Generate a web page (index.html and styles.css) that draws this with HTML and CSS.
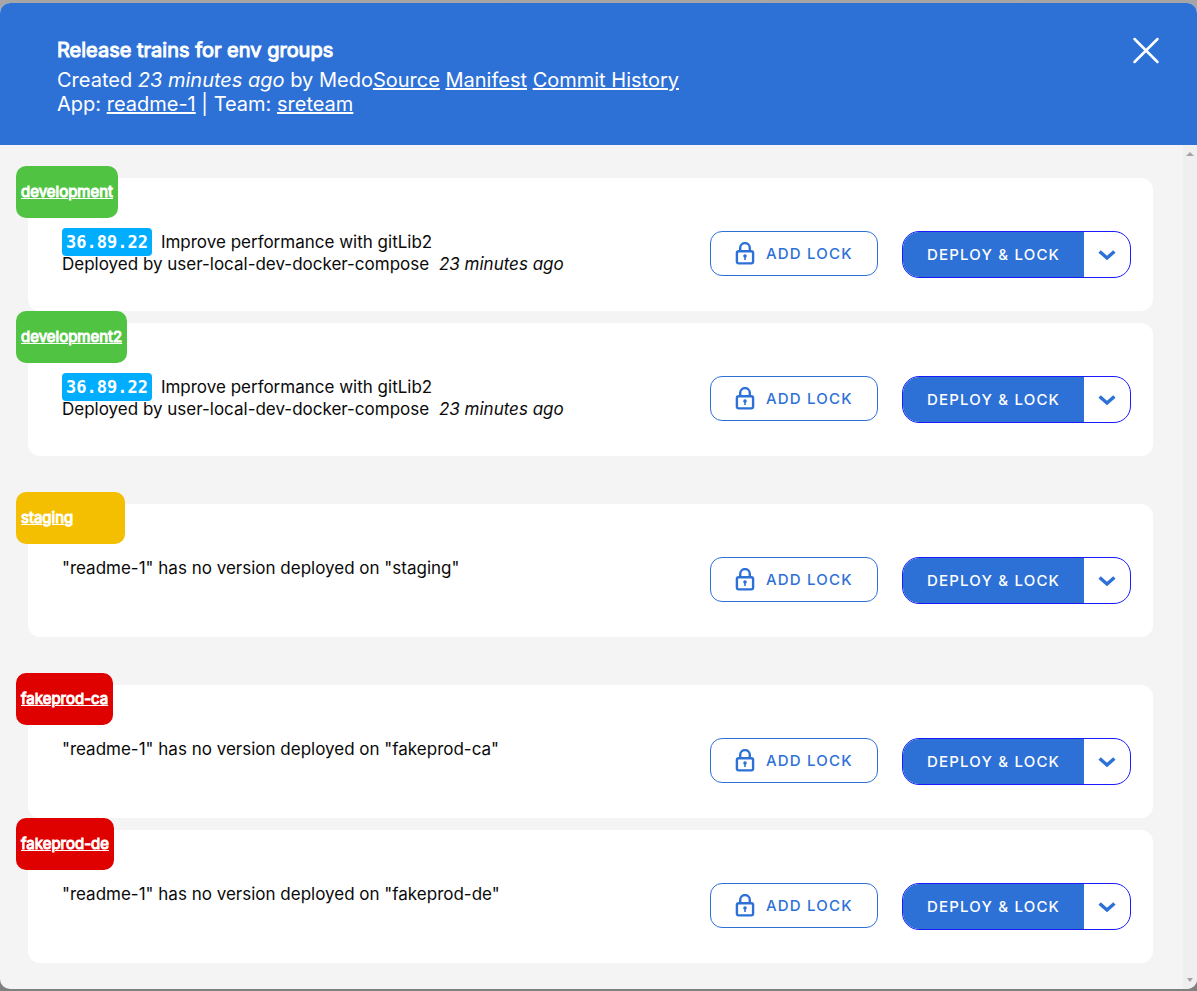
FILE: index.html
```
<!DOCTYPE html>
<html lang="en">
<head>
<meta charset="utf-8">
<title>Release trains for env groups</title>
<link rel="stylesheet" href="styles.css">
</head>
<body>
<svg class="sprite" aria-hidden="true">
  <symbol id="lock" viewBox="0 0 20 24">
    <rect x="1.900" y="9.200" width="16.200" height="12.200" rx="1.800" fill="none" stroke="currentColor" stroke-width="2.400"/>
    <path d="M5.200 9V5.900a4.800 4.800 0 0 1 9.600 0V9" fill="none" stroke="currentColor" stroke-width="2.400"/>
    <circle cx="10" cy="14" r="1.800" fill="currentColor"/>
    <path d="M10 14v4" stroke="currentColor" stroke-width="1.600"/>
  </symbol>
  <symbol id="chevron" viewBox="0 0 18 12">
    <path d="M1.600 2.400l7.400 6.600L16.400 2.400" fill="none" stroke="currentColor" stroke-width="3.400"/>
  </symbol>
</svg>
<main class="dialog">
  <header class="dialog-header">
    <div class="summary">
      <h1 class="title">Release trains for env groups</h1>
      <p class="meta">Created <i>23 minutes ago</i> by Medo<a href="#">Source</a> <a href="#">Manifest</a> <a href="#">Commit History</a></p>
      <p class="meta">App: <a href="#">readme-1</a> <span class="divider">|</span> Team: <a href="#">sreteam</a></p>
    </div>
    <button class="close" aria-label="Close">
      <svg width="28" height="28" viewBox="0 0 28 28"><path d="M2.500 3l23 23M25.500 3L2.500 26" stroke="currentColor" stroke-width="2.500" stroke-linecap="round"/></svg>
    </button>
  </header>
  <div class="dialog-body">
    <div class="groups">
      <section class="group">
        <article class="env">
          <a class="env-name dev" href="#">development</a>
          <div class="card">
            <div class="info">
              <p><span class="version">36.89.22</span><span class="message">Improve performance with gitLib2</span></p>
              <p>Deployed by user-local-dev-docker-compose <i class="when">23 minutes ago</i></p>
            </div>
            <div class="actions">
              <button class="add-lock"><svg class="lock"><use href="#lock"/></svg>ADD LOCK</button>
              <div class="split"><button class="deploy">DEPLOY &amp; LOCK</button><button class="more" aria-label="More options"><svg class="chevron"><use href="#chevron"/></svg></button></div>
            </div>
          </div>
        </article>
        <article class="env">
          <a class="env-name dev" href="#">development2</a>
          <div class="card">
            <div class="info">
              <p><span class="version">36.89.22</span><span class="message">Improve performance with gitLib2</span></p>
              <p>Deployed by user-local-dev-docker-compose <i class="when">23 minutes ago</i></p>
            </div>
            <div class="actions">
              <button class="add-lock"><svg class="lock"><use href="#lock"/></svg>ADD LOCK</button>
              <div class="split"><button class="deploy">DEPLOY &amp; LOCK</button><button class="more" aria-label="More options"><svg class="chevron"><use href="#chevron"/></svg></button></div>
            </div>
          </div>
        </article>
      </section>
      <section class="group">
        <article class="env">
          <a class="env-name stage" href="#">staging</a>
          <div class="card">
            <div class="info"><p>"readme-1" has no version deployed on "staging"</p></div>
            <div class="actions">
              <button class="add-lock"><svg class="lock"><use href="#lock"/></svg>ADD LOCK</button>
              <div class="split"><button class="deploy">DEPLOY &amp; LOCK</button><button class="more" aria-label="More options"><svg class="chevron"><use href="#chevron"/></svg></button></div>
            </div>
          </div>
        </article>
      </section>
      <section class="group">
        <article class="env">
          <a class="env-name prod" href="#">fakeprod-ca</a>
          <div class="card">
            <div class="info"><p>"readme-1" has no version deployed on "fakeprod-ca"</p></div>
            <div class="actions">
              <button class="add-lock"><svg class="lock"><use href="#lock"/></svg>ADD LOCK</button>
              <div class="split"><button class="deploy">DEPLOY &amp; LOCK</button><button class="more" aria-label="More options"><svg class="chevron"><use href="#chevron"/></svg></button></div>
            </div>
          </div>
        </article>
        <article class="env">
          <a class="env-name prod" href="#">fakeprod-de</a>
          <div class="card">
            <div class="info"><p>"readme-1" has no version deployed on "fakeprod-de"</p></div>
            <div class="actions">
              <button class="add-lock"><svg class="lock"><use href="#lock"/></svg>ADD LOCK</button>
              <div class="split"><button class="deploy">DEPLOY &amp; LOCK</button><button class="more" aria-label="More options"><svg class="chevron"><use href="#chevron"/></svg></button></div>
            </div>
          </div>
        </article>
      </section>
    </div>
    <div class="scrollbar" aria-hidden="true">
      <svg width="8" height="4" viewBox="0 0 8 4"><path d="M0 4l4-4 4 4z" fill="#a3a3a3"/></svg>
      <svg width="6" height="4" viewBox="0 0 6 4"><path d="M0 0h6L3 4z" fill="#a3a3a3"/></svg>
    </div>
  </div>
</main>
</body>
</html>
```
FILE: styles.css
```
* { box-sizing: border-box; }
body {
  margin: 0;
  min-height: 100vh;
  padding: 3px 0 2px;
  display: flex;
  background: linear-gradient(#a6a6a6, #808080);
  font-family: Inter, "Liberation Sans", sans-serif;
  font-size: 17px;
  line-height: 22px;
  color: #0a0a0a;
}
h1, p { margin: 0; }
button { font: inherit; padding: 0; border: 0; background: none; cursor: pointer; }
.sprite { position: absolute; width: 0; height: 0; }
.dialog {
  flex: 1;
  display: flex;
  flex-direction: column;
  border-radius: 10px;
  overflow: hidden;
  background: #f4f4f4;
}
.dialog-header {
  display: flex;
  justify-content: space-between;
  align-items: flex-start;
  padding: 33px 37px 29px 57px;
  background: #2d71d7;
  color: #fff;
  font-size: 20px;
  line-height: 24px;
}
.title {
  margin-bottom: 4px;
  font-size: 20px;
  font-weight: 400;
  line-height: 28px;
  -webkit-text-stroke: 1px currentColor;
}
.dialog-header a { color: inherit; }
.close { display: flex; color: #fff; }
.dialog-body { flex: 1; display: flex; }
.groups {
  flex: 1;
  display: flex;
  flex-direction: column;
  gap: 36px;
  padding: 21px 30px 26px 16px;
}
.env { position: relative; padding: 12px 0 0 12px; }
.env-name {
  position: absolute;
  top: 0;
  left: 0;
  padding: 0 5px;
  border-radius: 10px;
  color: #fff;
  font-size: 15px;
  font-weight: 400;
  line-height: 52px;
  -webkit-text-stroke: 1px currentColor;
}
.dev { background: #50c343; }
.stage { background: #f4bf00; min-width: 109px; }
.prod { background: #df0000; }
.card {
  display: flex;
  justify-content: space-between;
  align-items: flex-start;
  padding: 53px 22px 33px 34px;
  border-radius: 12px;
  background: #fff;
}
.version {
  margin-right: 9px;
  padding: 4px;
  border-radius: 4px;
  background: #00adff;
  color: #fff;
  font: bold 17px/22px "DejaVu Sans Mono", monospace;
}
.when { margin-left: 5px; }
.actions { display: flex; gap: 24px; font-size: 15px; font-weight: 500; letter-spacing: 0.08em; }
.add-lock {
  display: flex;
  align-items: center;
  gap: 11px;
  width: 168px;
  height: 45px;
  padding-left: 24px;
  border: 1px solid #2d71d7;
  border-radius: 12px;
  color: #2d71d7;
  letter-spacing: inherit;
}
.lock { width: 20px; height: 24px; }
.split {
  display: flex;
  width: 229px;
  height: 47px;
  border: 1px solid #1a1aff;
  border-radius: 17px;
  overflow: hidden;
}
.deploy { flex: 1; background: #2d71d7; color: #fff; letter-spacing: inherit; }
.more { display: flex; align-items: center; justify-content: center; width: 46px; color: #2d71d7; }
.chevron { width: 18px; height: 12px; }
.scrollbar {
  display: flex;
  flex-direction: column;
  justify-content: space-between;
  align-items: center;
  width: 14px;
  padding: 7px 0;
  background: #efefef;
}
```
